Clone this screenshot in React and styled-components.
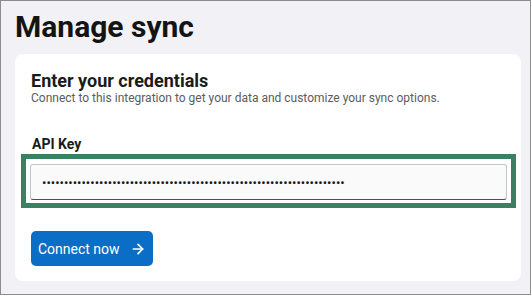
import React from 'react';
import styled, { createGlobalStyle } from 'styled-components';
import { ArrowRight } from 'lucide-react';

const GlobalStyle = createGlobalStyle`
  html, body {
    margin: 0;
    padding: 0;
    font-family: Roboto, "Liberation Sans", Arial, sans-serif;
  }
  * { box-sizing: border-box; }
`;

const Page = styled.div`
  width: 531px;
  height: 295px;
  border: 1px solid #8c8c8c;
  background: #f2f1f6;
  padding: 8px 9px 0 14px;
  overflow: hidden;
`;

const Title = styled.h1`
  margin: 0 0 10px;
  font-size: 30px;
  font-weight: 700;
  line-height: normal;
  color: #141414;
`;

const Card = styled.section`
  background: #ffffff;
  border-radius: 8px;
  padding: 16px 16px 15px 16px;
`;

const Heading = styled.h2`
  margin: 0;
  font-size: 18px;
  font-weight: 700;
  line-height: normal;
  color: #1b1b1b;
`;

const Subtitle = styled.p`
  margin: 0;
  font-size: 12px;
  line-height: normal;
  color: #5c5c5c;
`;

const Label = styled.label`
  display: block;
  margin-top: 31px;
  padding-left: 1px;
  font-size: 14px;
  font-weight: 700;
  line-height: normal;
  color: #1a1a1a;
`;

const FieldFrame = styled.div`
  margin: 2px -11px 0 -10px;
  border: 5px solid #3b8063;
  padding: 5px 4px 3px 4px;
`;

const Input = styled.input`
  display: block;
  width: 100%;
  height: 36px;
  padding: 0 11px;
  border: 1px solid #c6c6c6;
  border-bottom-color: #4e4e4e;
  border-radius: 3px;
  background: #fafafa;
  font-family: Roboto, "Liberation Sans", Arial, sans-serif;
  font-size: 13px;
  color: #1a1a1a;
  outline: none;
`;

const Button = styled.button`
  margin-top: 23px;
  height: 35px;
  display: inline-flex;
  align-items: center;
  gap: 10px;
  padding: 0 7px 0 7px;
  border: none;
  border-radius: 5px;
  background: #0a6ec6;
  color: #ffffff;
  font-family: Roboto, "Liberation Sans", Arial, sans-serif;
  font-size: 14px;
  cursor: pointer;
`;

function App() {
  return (
    <>
      <GlobalStyle />
      <Page>
        <Title>Manage sync</Title>
        <Card>
          <Heading>Enter your credentials</Heading>
          <Subtitle>
            Connect to this integration to get your data and customize your sync options.
          </Subtitle>
          <Label htmlFor="api-key">API Key</Label>
          <FieldFrame>
            <Input
              id="api-key"
              type="password"
              defaultValue={'x'.repeat(69)}
              readOnly
            />
          </FieldFrame>
          <Button type="button">
            Connect now
            <ArrowRight size={16} strokeWidth={2.5} />
          </Button>
        </Card>
      </Page>
    </>
  );
}

export default App;
